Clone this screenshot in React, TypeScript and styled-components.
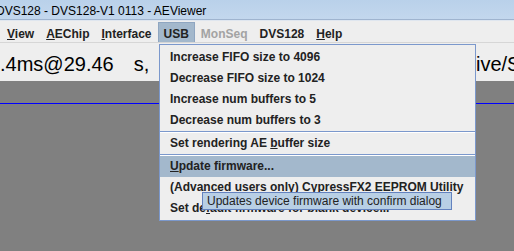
import React from "react";
import styled, { createGlobalStyle } from "styled-components";

const GlobalStyle = createGlobalStyle`
  html, body {
    margin: 0;
    padding: 0;
    overflow: hidden;
    background: #808080;
  }
  body {
    font-family: "Liberation Sans", Arial, sans-serif;
  }
`;

const Window = styled.div`
  position: relative;
  width: 514px;
  height: 251px;
  display: flex;
  flex-direction: column;
  overflow: hidden;
  background: #808080;
`;

const TitleBar = styled.div`
  height: 20px;
  line-height: 20px;
  padding-top: 1px;
  box-sizing: border-box;
  background: linear-gradient(#b9d1ea, #c3d7ed);
  border-bottom: 1px solid #9fb4cf;
  font-size: 12px;
  color: #000;
  white-space: nowrap;
  overflow: hidden;
`;

const TitleText = styled.span`
  display: inline-block;
  margin-left: -4px;
`;

const MenuBar = styled.div`
  height: 23px;
  box-sizing: border-box;
  border-top: 1px solid #dfe6ef;
  display: flex;
  align-items: stretch;
  padding: 0 0 0 1px;
  background: #eeeeee;
  border-bottom: 1px solid #d6d6d6;
`;

const MenuTitle = styled.div<{ $active?: boolean; $disabled?: boolean }>`
  padding: 1px 5px 0;
  margin: 1px 0 0;
  line-height: 20px;
  font-size: 12px;
  font-weight: bold;
  box-sizing: border-box;
  color: ${(p) => (p.$disabled ? "#a3a3a3" : "#222")};
  background: ${(p) => (p.$active ? "#a3b8cc" : "transparent")};
  border: 1px solid ${(p) => (p.$active ? "#8fa6c1" : "transparent")};
  border-bottom: none;
`;

const StatusRow = styled.div`
  height: 38px;
  box-sizing: border-box;
  padding-top: 11px;
  display: grid;
  grid-template-columns: 476px 1fr;
  background: #eeeeee;
  font-size: 20px;
  line-height: 20px;
  color: #000;
  white-space: nowrap;
  overflow: hidden;
`;

const StatusCell = styled.div`
  overflow: hidden;
`;

const Unit = styled.span`
  margin-left: 20px;
`;

const Canvas = styled.div`
  flex: 1;
  background: #808080;
  padding-top: 22px;
`;

const BlueLine = styled.div`
  height: 1px;
  background: #0000ff;
`;

const Popup = styled.div`
  position: absolute;
  left: 159px;
  top: 44px;
  width: 317px;
  box-sizing: border-box;
  padding: 2px 0 1px;
  background: #eeeeee;
  border: 1px solid #7b98cc;
`;

const Item = styled.div<{ $selected?: boolean }>`
  height: 21px;
  line-height: 21px;
  padding-left: 10px;
  font-size: 12px;
  font-weight: bold;
  color: #222;
  white-space: nowrap;
  background: ${(p) => (p.$selected ? "#a3b8cc" : "transparent")};
`;

const Separator = styled.div`
  height: 1px;
  background: #7b98cc;
  border-bottom: 1px solid #ffffff;
`;

const Tooltip = styled.div`
  position: absolute;
  left: 202px;
  top: 192px;
  width: 250px;
  height: 18px;
  box-sizing: border-box;
  padding-left: 4px;
  line-height: 16px;
  font-size: 12px;
  color: #222;
  white-space: nowrap;
  background: #b8cfe5;
  border: 1px solid #6382bf;
`;

const menus = [
  { label: "View", mn: 0 },
  { label: "AEChip", mn: 0 },
  { label: "Interface", mn: 0 },
  { label: "USB", active: true },
  { label: "MonSeq", disabled: true },
  { label: "DVS128" },
  { label: "Help", mn: 0 },
];

const withMnemonic = (text: string, at?: number) =>
  at === undefined ? (
    text
  ) : (
    <>
      {text.slice(0, at)}
      <u>{text[at]}</u>
      {text.slice(at + 1)}
    </>
  );

export default function App() {
  return (
    <>
      <GlobalStyle />
      <Window>
        <TitleBar>
          <TitleText>DVS128 - DVS128-V1 0113 - AEViewer</TitleText>
        </TitleBar>
        <MenuBar>
          {menus.map((m) => (
            <MenuTitle key={m.label} $active={m.active} $disabled={m.disabled}>
              {withMnemonic(m.label, m.mn)}
            </MenuTitle>
          ))}
        </MenuBar>
        <StatusRow>
          <StatusCell>
            .4ms@29.46<Unit>s,</Unit>
          </StatusCell>
          <StatusCell>ive/Stopped</StatusCell>
        </StatusRow>
        <Canvas>
          <BlueLine />
        </Canvas>

        <Popup>
          <Item>Increase FIFO size to 4096</Item>
          <Item>Decrease FIFO size to 1024</Item>
          <Item>Increase num buffers to 5</Item>
          <Item>Decrease num buffers to 3</Item>
          <Separator />
          <Item>{withMnemonic("Set rendering AE buffer size", 17)}</Item>
          <Separator />
          <Item $selected>{withMnemonic("Update firmware...", 0)}</Item>
          <Item>(Advanced users only) CypressFX2 EEPROM Utility</Item>
          <Item>{withMnemonic("Set default firmware for blank device...", 6)}</Item>
        </Popup>
        <Tooltip>Updates device firmware with confirm dialog</Tooltip>
      </Window>
    </>
  );
}
